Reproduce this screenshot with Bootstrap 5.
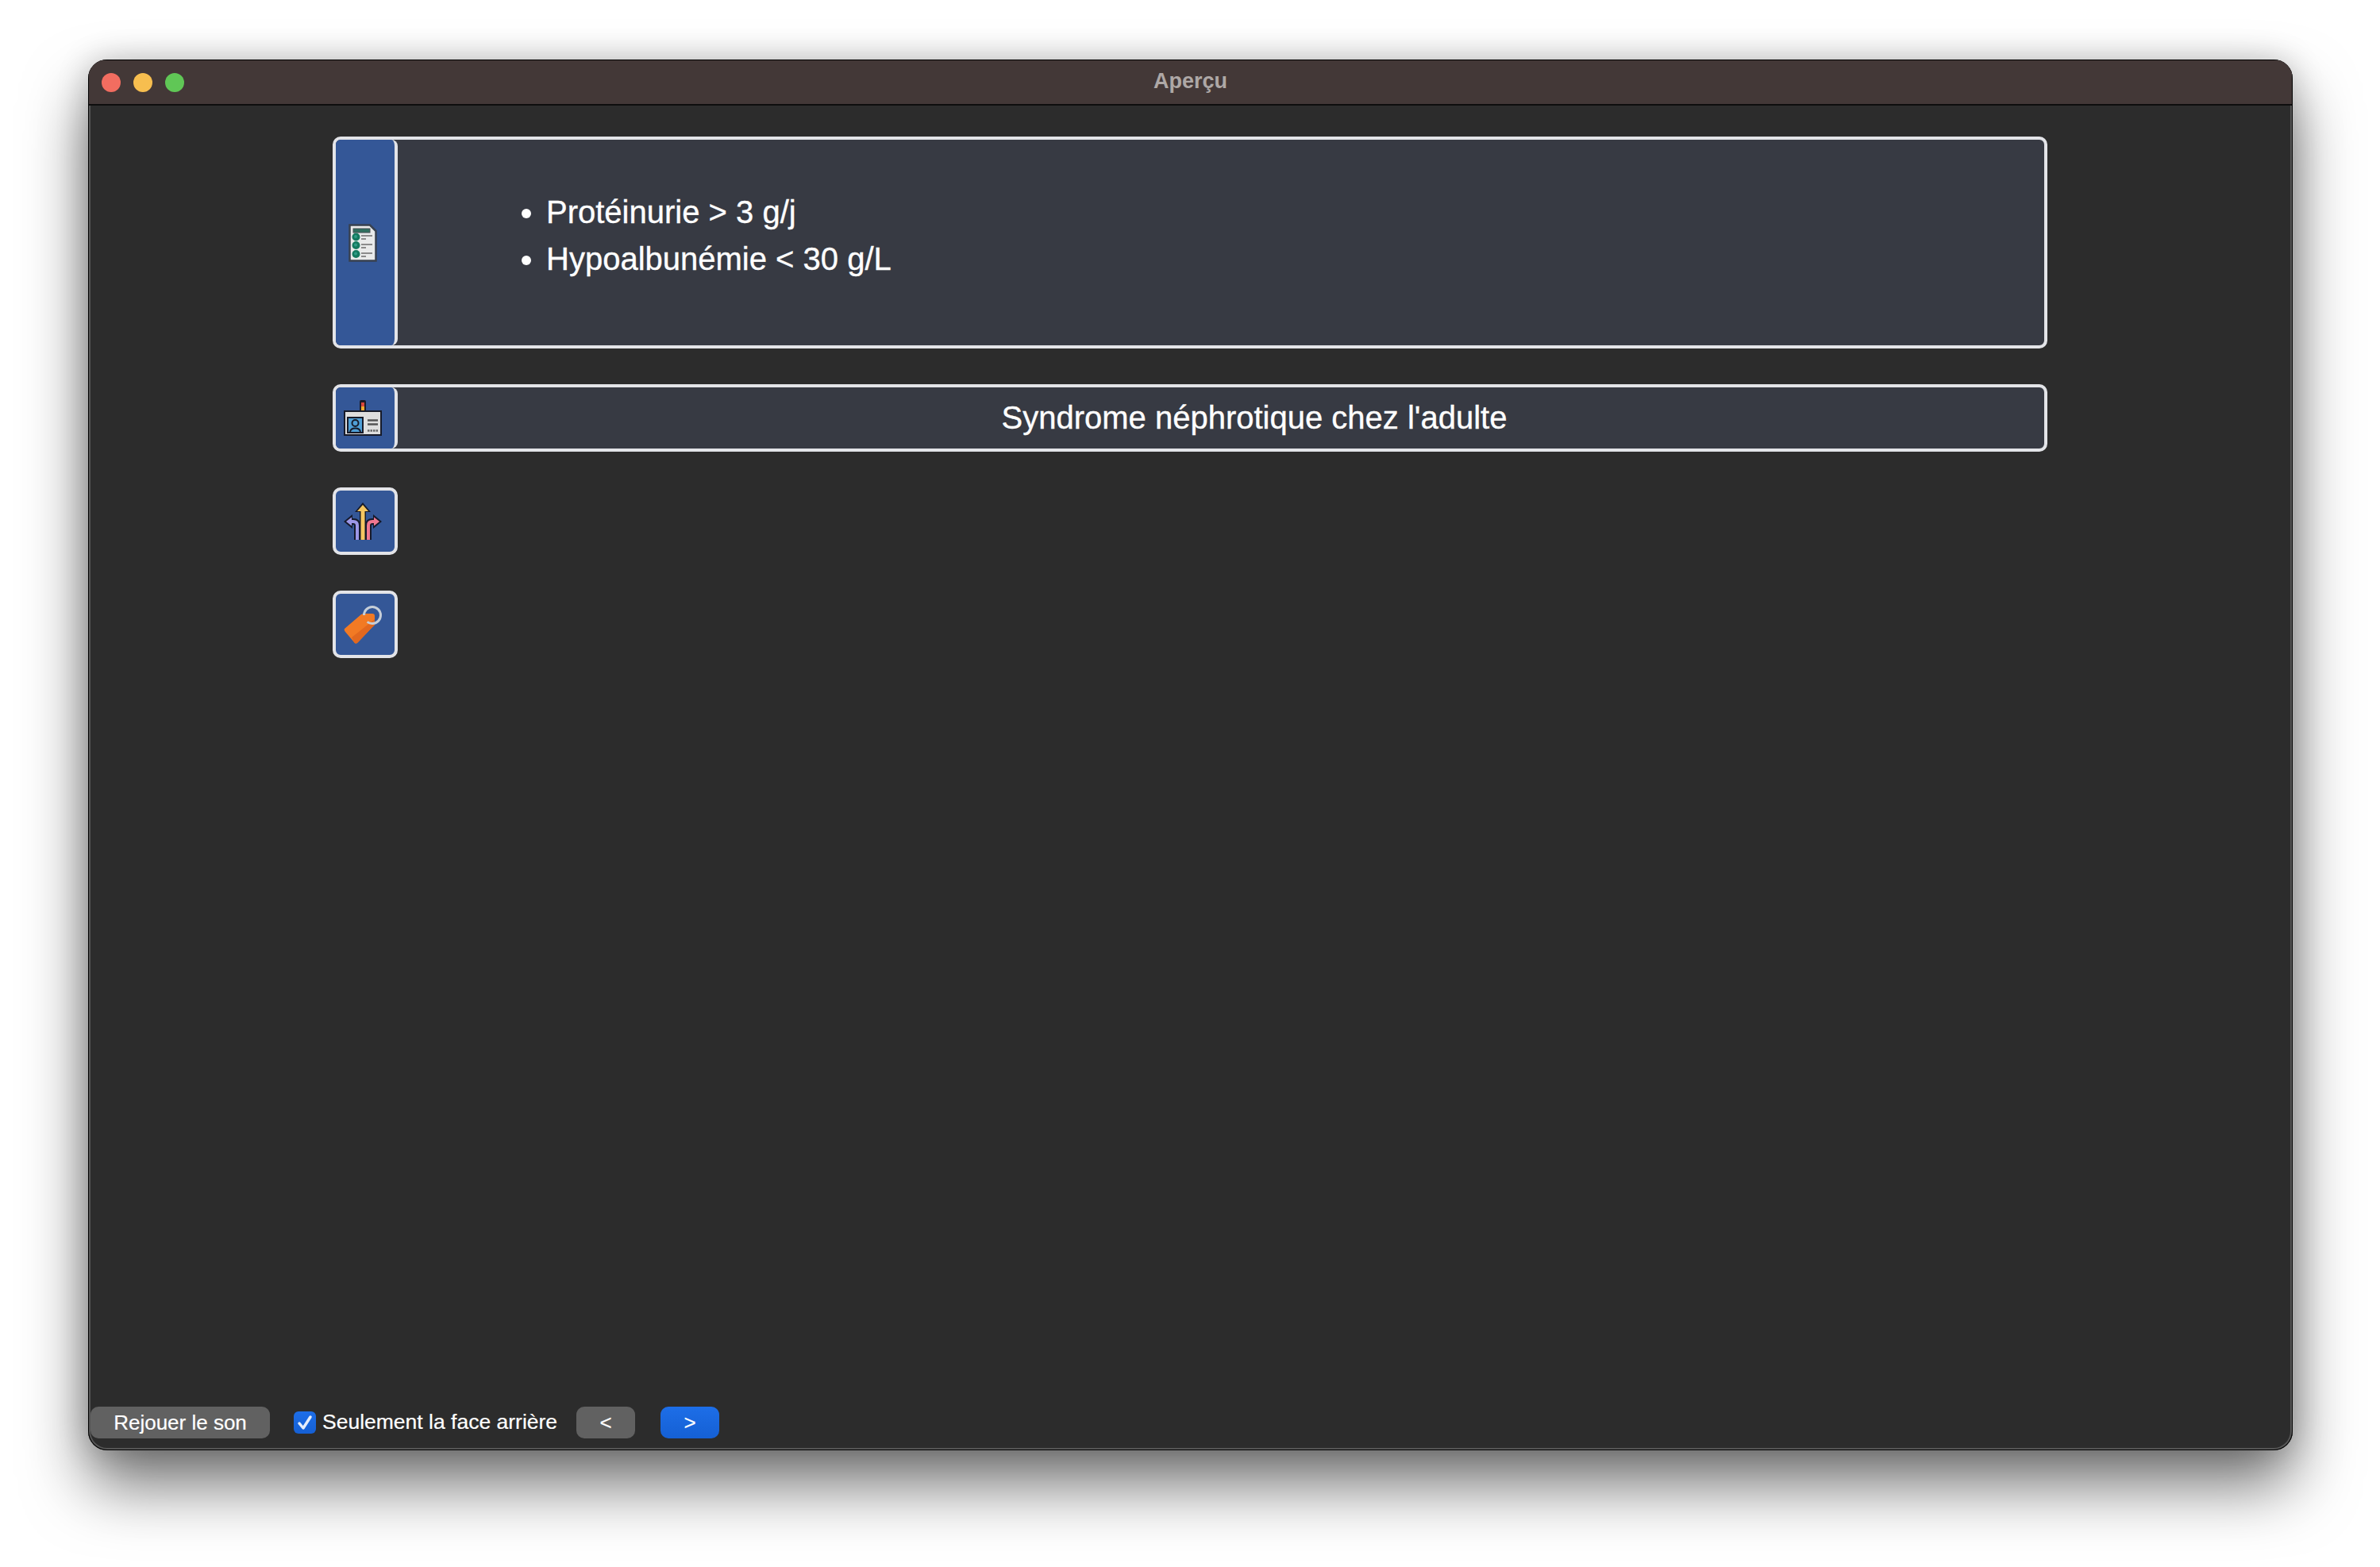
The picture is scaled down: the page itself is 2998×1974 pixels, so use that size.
<!DOCTYPE html>
<html lang="fr">
<head>
<meta charset="utf-8">
<title>Aperçu</title>
<link href="https://cdn.jsdelivr.net/npm/bootstrap@5.3.0/dist/css/bootstrap.min.css" rel="stylesheet">
<style>
html,body{height:100%;margin:0}
body{background:#fff;padding:75px 110px 147px 111px;font-family:"Liberation Sans",Arial,sans-serif;overflow:hidden}
.appwin{height:100%;background:#2c2c2c;border-radius:24px;box-shadow:0 0 0 1px #000 inset,0 0 0 3px #555 inset,0 44px 80px rgba(0,0,0,.55),0 0 40px rgba(0,0,0,.2);overflow:hidden}
.titlebar{height:57px;background:#433837;border-bottom:2px solid #0e0e0e;position:relative;flex:none;margin:1px 1px 0}
.tl{width:24px;height:24px;border-radius:50%}
.tl-r{background:#f26d60}.tl-y{background:#f7be4f}.tl-g{background:#60c756}
.lights{padding-left:16px;gap:16px;height:100%}
.wintitle{color:#aea8a6;font-weight:700;font-size:27px;padding-bottom:2px}
.mainarea{padding:39px 309px 0 308px;gap:45px;min-height:0}
.fcard{border:4px solid #e3e4e8;border-radius:10px;background:#373a43;color:#fff;overflow:hidden;flex:none}
.tile{width:78px;flex:none;background:#345797;border-right:4px solid #e3e4e8;border-radius:0 8px 8px 0;padding-right:6px}
.tall{height:267px}
.short{height:85px}
.only{width:82px;height:85px;border:4px solid #e3e4e8;border-radius:10px;background:#345797;flex:none;padding-right:6px}
.bullets{margin:0 0 18px;padding:0 0 0 187px;font-size:40px;line-height:59px;list-style:disc;-webkit-text-stroke:.35px #fff}
.headline{font-size:40px;line-height:1;padding-left:84px;padding-bottom:2px;-webkit-text-stroke:.35px #fff}
.footbar{height:40px;margin:0 0 15px 3px;flex:none}
.gbtn{height:40px;border:0;border-radius:10px;color:#fff;background:#616161;font-size:26px;line-height:1;padding:0;-webkit-text-stroke:.2px #fff}
.gbtn.blue{background:linear-gradient(#1d6ee8,#1560d4)}
.w-rej{width:226px}
.w-nav{width:74px}
.nav-gap{margin-right:32px}
.chk{width:28px;height:28px;border-radius:6px;background:linear-gradient(#1d6ee8,#1560d4);margin-left:30px}
.chklabel{color:#fff;font-size:26.500px;margin-left:8px;margin-right:24px;-webkit-text-stroke:.2px #fff}
</style>
</head>
<body>
<div class="appwin d-flex flex-column">
  <div class="titlebar">
    <div class="d-flex align-items-center lights"><span class="tl tl-r"></span><span class="tl tl-y"></span><span class="tl tl-g"></span></div>
    <div class="position-absolute top-0 start-0 w-100 h-100 d-flex align-items-center justify-content-center wintitle">Aperçu</div>
  </div>
  <div class="mainarea flex-grow-1 d-flex flex-column">
    <div class="fcard tall d-flex">
      <div class="tile d-flex align-items-center justify-content-center">
        <svg width="36" height="48" viewBox="0 0 36 48"><path d="M1.500 1.500H27L34.500 9V46.500H1.500Z" fill="#e9eaea" stroke="#38414f" stroke-width="2.500"/><rect x="6" y="6" width="21" height="5" fill="#2f6f5f" stroke="#4a4f55" stroke-width="1"/><circle cx="9.500" cy="16.500" r="5" fill="#147a60"/><circle cx="9.500" cy="27" r="5" fill="#147a60"/><circle cx="9.500" cy="38" r="5" fill="#147a60"/><circle cx="9" cy="16" r="2" fill="#2f9b86"/><circle cx="9" cy="26.500" r="2" fill="#2f9b86"/><circle cx="9" cy="37.500" r="2" fill="#2f9b86"/><path d="M16 15h14M16 19h6M16 26h14M16 30h6M16 37h14M16 41h6" stroke="#8b8b8b" stroke-width="1.800"/></svg>
      </div>
      <div class="flex-grow-1 d-flex align-items-center">
        <ul class="bullets"><li>Protéinurie &gt; 3 g/j</li><li>Hypoalbunémie &lt; 30 g/L</li></ul>
      </div>
    </div>
    <div class="fcard short d-flex">
      <div class="tile d-flex align-items-center justify-content-center">
        <svg width="48" height="45" viewBox="0 0 48 45"><rect x="20" y="0" width="8" height="19" rx="2" fill="#1c1c28"/><rect x="22" y="3" width="4" height="5" fill="#d9483b"/><rect x="22" y="8" width="4" height="9" fill="#f0a92c"/><rect x="1" y="14" width="46" height="30" fill="#dedede" stroke="#171b2a" stroke-width="2"/><rect x="5" y="22" width="19" height="19" fill="#4f9fd6" stroke="#171b2a" stroke-width="2"/><circle cx="14.500" cy="29" r="4" fill="none" stroke="#171b2a" stroke-width="2"/><path d="M8 40c1-6 12-6 13 0" fill="none" stroke="#171b2a" stroke-width="2"/><path d="M30 25.500h13M30 30.500h13" stroke="#555" stroke-width="2.500"/><path d="M30 38.500h13" stroke="#666" stroke-width="2.500" stroke-dasharray="2.500 1"/></svg>
      </div>
      <div class="flex-grow-1 d-flex align-items-center justify-content-center headline">Syndrome néphrotique chez l'adulte</div>
    </div>
    <div class="only d-flex align-items-center justify-content-center">
      <svg width="48" height="48" viewBox="0 0 48 48">
        <g fill="none" stroke="#161a2b" stroke-width="8">
          <path d="M17 47V29Q17 24 12 24H8"/><path d="M31 47V29Q31 24 36 24H40"/><path d="M24 47V9"/>
        </g>
        <path d="M0 24 11 15V33ZM48 24 37 15V33ZM24 0 34 12H14Z" fill="#161a2b"/>
        <g fill="none" stroke-width="4">
          <path d="M17 47V29Q17 24 12 24H8" stroke="#9c97e8"/><path d="M31 47V29Q31 24 36 24H40" stroke="#f07790"/>
        </g>
        <path d="M24 47V9" fill="none" stroke="#161a2b" stroke-width="8"/>
        <path d="M24 47V9" fill="none" stroke="#f5c660" stroke-width="5"/>
        <path d="M3 24 10 18.500V29.500Z" fill="#9c97e8"/><path d="M45 24 38 18.500V29.500Z" fill="#f07790"/><path d="M24 3 31 11H17Z" fill="#f5c660"/>
      </svg>
    </div>
    <div class="only d-flex align-items-center justify-content-center">
      <svg width="48" height="48" viewBox="0 0 48 48"><path d="M1 29 22 11Q24 10 27 10H36Q39 10 39 13V22Q39 25 37 26L18 46Q15 49 13 46L2 33Q0 31 1 29Z" fill="#f27a24"/><path d="M10 40 39 17V22Q39 25 37 26L18 46Q15 49 13 46Z" fill="#e2681f"/><circle cx="36" cy="12" r="10.500" fill="none" stroke="#c6ced8" stroke-width="3" stroke-dasharray="56 10" transform="rotate(180 36 12)"/></svg>
    </div>
  </div>
  <div class="footbar d-flex align-items-center">
    <button type="button" class="btn gbtn w-rej">Rejouer le son</button>
    <span class="chk d-flex align-items-center justify-content-center"><svg width="22" height="22" viewBox="0 0 22 22"><path d="M4 12 9 18 18 4" fill="none" stroke="#e6eefb" stroke-width="3.500" stroke-linecap="round" stroke-linejoin="round"/></svg></span>
    <span class="chklabel">Seulement la face arrière</span>
    <button type="button" class="btn gbtn w-nav nav-gap">&lt;</button>
    <button type="button" class="btn gbtn blue w-nav">&gt;</button>
  </div>
</div>
<script src="https://cdn.jsdelivr.net/npm/bootstrap@5.3.0/dist/js/bootstrap.bundle.min.js"></script>
</body>
</html>
